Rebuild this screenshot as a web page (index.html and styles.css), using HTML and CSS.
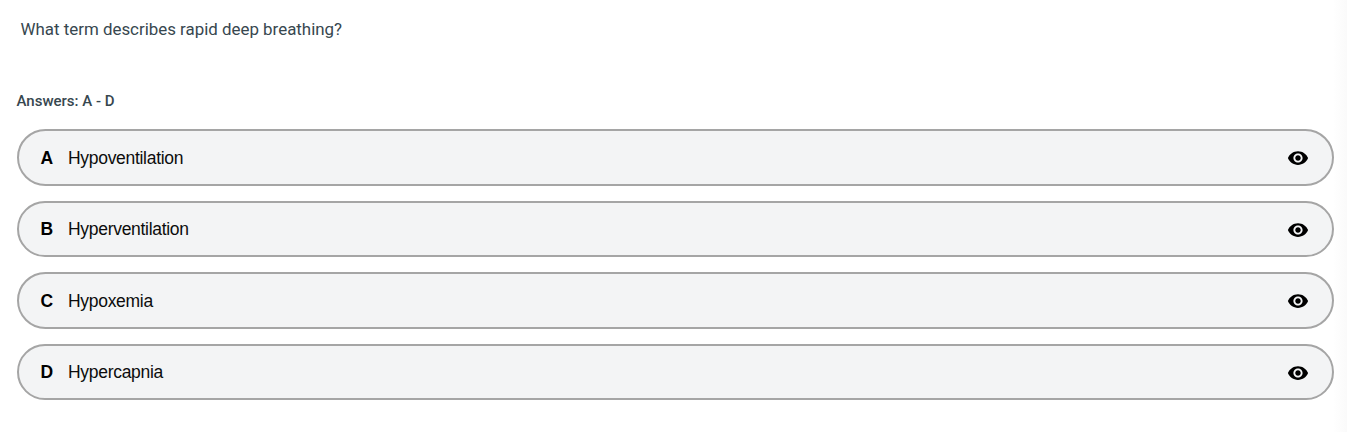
FILE: index.html
```html
<!DOCTYPE html>
<html lang="en">

<head>
    <meta charset="UTF-8">
    <meta name="viewport" content="width=device-width, initial-scale=1.0">
    <title>Quiz</title>
    <link rel="stylesheet" href="styles.css">
</head>

<body>
    <svg class="sprite">
        <symbol id="eye" viewBox="0 0 24 24">
            <path d="M12 4.500C7 4.500 2.730 7.610 1 12c1.730 4.390 6 7.500 11 7.500s9.270-3.110 11-7.500c-1.730-4.390-6-7.500-11-7.500zM12 17c-2.760 0-5-2.240-5-5s2.240-5 5-5 5 2.240 5 5-2.240 5-5 5zm0-8c-1.660 0-3 1.340-3 3s1.340 3 3 3 3-1.340 3-3-1.340-3-3-3z"/>
        </symbol>
    </svg>

    <main class="quiz">
        <p class="question">What term describes rapid deep breathing?</p>
        <h2 class="answers-title">Answers: A - D</h2>
        <ul class="answers">
            <li class="answer">
                <span class="letter">A</span>
                <span class="text">Hypoventilation</span>
                <svg class="eye"><use href="#eye"/></svg>
            </li>
            <li class="answer">
                <span class="letter">B</span>
                <span class="text">Hyperventilation</span>
                <svg class="eye"><use href="#eye"/></svg>
            </li>
            <li class="answer">
                <span class="letter">C</span>
                <span class="text">Hypoxemia</span>
                <svg class="eye"><use href="#eye"/></svg>
            </li>
            <li class="answer">
                <span class="letter">D</span>
                <span class="text">Hypercapnia</span>
                <svg class="eye"><use href="#eye"/></svg>
            </li>
        </ul>
    </main>
</body>

</html>
```
FILE: styles.css
```css
* {
    box-sizing: border-box;
}

body {
    margin: 0;
    min-height: 100vh;
    background: linear-gradient(to right, #fff calc(100% - 14px), #fafafa);
    font-family: Roboto, sans-serif;
    color: #37474f;
}

.sprite {
    display: none;
}

.quiz {
    padding: 17px 13.5px 0 16.5px;
}

.question {
    margin: 0 0 0 4px;
    font-size: 16.9px;
    line-height: 24px;
}

.answers-title {
    margin: 49px 0 17px;
    font-size: 15px;
    font-weight: 500;
    line-height: 22px;
}

.answers {
    display: flex;
    flex-direction: column;
    gap: 15px;
    margin: 0;
    padding: 0;
    list-style: none;
}

.answer {
    display: flex;
    align-items: center;
    height: 56.5px;
    padding: 1.5px 22.5px 0 22px;
    border: 2px solid #a5a5a5;
    border-radius: 29px;
    background: #f3f4f5;
    color: #0c0c0c;
}

.letter {
    width: 27.5px;
    font-family: "Liberation Sans", Arial, sans-serif;
    font-size: 17.5px;
    font-weight: bold;
    color: #000;
}

.text {
    flex: 1;
    font-family: "Liberation Sans", Arial, sans-serif;
    font-size: 17.5px;
    letter-spacing: -0.3px;
}

.eye {
    width: 22px;
    height: 22px;
}
```
